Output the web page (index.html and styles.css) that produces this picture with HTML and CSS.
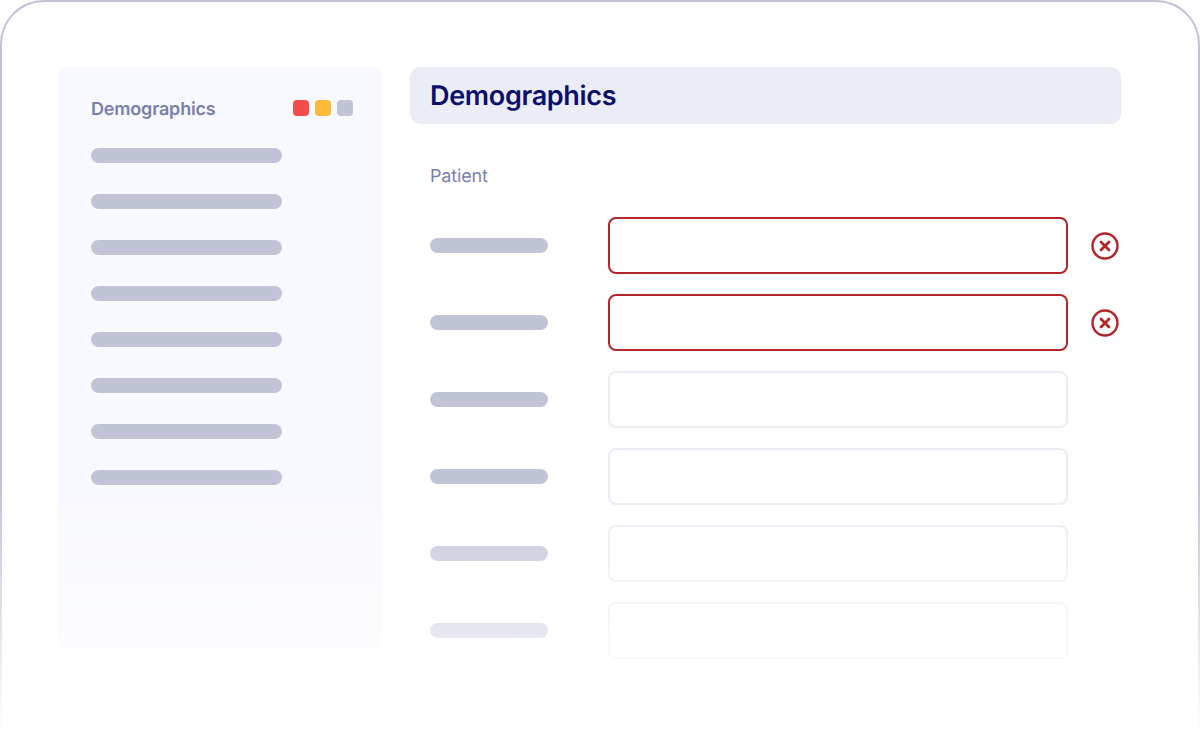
FILE: index.html
```html
<!DOCTYPE html>
<html lang="en">
<head>
<meta charset="utf-8">
<title>Demographics</title>
<link rel="stylesheet" href="styles.css">
</head>
<body>
<div class="frame">
  <aside class="sidebar">
    <div class="side-head">
      <span class="side-title">Demographics</span>
      <div class="dots"><i class="dot red"></i><i class="dot amber"></i><i class="dot grey"></i></div>
    </div>
    <div class="side-list">
      <div class="bar"></div><div class="bar"></div><div class="bar"></div><div class="bar"></div>
      <div class="bar"></div><div class="bar"></div><div class="bar"></div><div class="bar"></div>
    </div>
  </aside>
  <main class="main">
    <h1 class="title">Demographics</h1>
    <div class="section">Patient</div>
    <div class="rows">
      <div class="row">
        <div class="label"></div><div class="input error"></div>
        <svg class="err" viewBox="0 0 28 28"><circle cx="14" cy="14" r="12.5"/><path d="M10 10l8 8M18 10l-8 8"/></svg>
      </div>
      <div class="row">
        <div class="label"></div><div class="input error"></div>
        <svg class="err" viewBox="0 0 28 28"><circle cx="14" cy="14" r="12.5"/><path d="M10 10l8 8M18 10l-8 8"/></svg>
      </div>
      <div class="row"><div class="label"></div><div class="input"></div></div>
      <div class="row"><div class="label"></div><div class="input"></div></div>
      <div class="row"><div class="label"></div><div class="input"></div></div>
      <div class="row"><div class="label"></div><div class="input"></div></div>
    </div>
  </main>
  <div class="fade"></div>
</div>
</body>
</html>
```
FILE: styles.css
```css
* { box-sizing: border-box; }
html, body { margin: 0; padding: 0; background: #fff; }
body { font-family: Inter, "Liberation Sans", sans-serif; -webkit-font-smoothing: antialiased; text-rendering: geometricPrecision; }
.frame {
  position: relative;
  width: 1200px;
  height: 750px;
  display: flex;
  align-items: flex-start;
  gap: 28px;
  padding: 65px 77px 0 56px;
  background: #fff;
  border: 2px solid #c1c4d6;
  border-bottom: 0;
  border-radius: 44px 44px 0 0;
}
.sidebar {
  flex: 0 0 324px;
  height: 581px;
  padding: 33px 29px 0 33px;
  background: #f8f9fe;
  border-radius: 10px;
}
.side-head { display: flex; justify-content: space-between; align-items: center; height: 16px; }
.side-title { font-size: 18px; font-weight: 600; letter-spacing: -0.01em; line-height: 18px; color: #7a7fab; margin-top: 4px; }
.dots { display: flex; gap: 6px; }
.dot { display: block; width: 16px; height: 16px; border-radius: 4px; }
.red { background: #f64c4c; }
.amber { background: #ffb938; }
.grey { background: #c1c4d6; }
.side-list { display: flex; flex-direction: column; gap: 31px; margin-top: 32px; }
.bar { width: 191px; height: 15px; border-radius: 8px; background: #c1c4d6; }
.main { flex: 0 0 711px; }
.title {
  margin: 0;
  height: 57px;
  padding: 0 20px;
  display: flex;
  align-items: center;
  background: #ebedf6;
  border-radius: 10px;
  font-size: 27px;
  font-weight: 600;
  letter-spacing: -0.012em;
  color: #0c0f6b;
}
.section {
  margin: 40px 0 0 20px;
  height: 26px;
  line-height: 26px;
  font-size: 18px;
  letter-spacing: -0.01em;
  color: #7a7fab;
}
.rows { display: flex; flex-direction: column; gap: 20px; margin-top: 27px; padding-left: 20px; }
.row { display: flex; align-items: center; height: 57px; }
.label { width: 118px; height: 15px; border-radius: 8px; background: #c1c4d6; }
.input { width: 460px; height: 57px; margin-left: 60px; background: #fff; border: 2px solid #ebedf6; border-radius: 8px; }
.input.error { border-color: #b2262a; }
.err { width: 28px; height: 28px; margin-left: 23px; fill: none; stroke: #b2262a; }
.err circle { stroke-width: 2.4; }
.err path { stroke-width: 2.8; stroke-linecap: round; }
.fade {
  position: absolute;
  left: -2px;
  right: -2px;
  bottom: 0;
  height: 266px;
  background: linear-gradient(to bottom, rgba(255,255,255,0), #fff 94%);
  pointer-events: none;
}
```
